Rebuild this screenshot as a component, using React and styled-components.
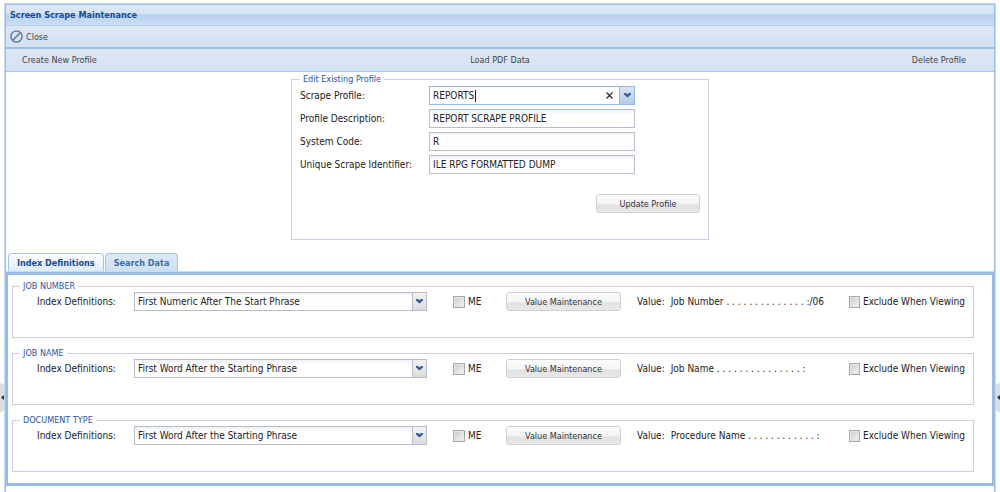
import React from "react";
import styled, { createGlobalStyle } from "styled-components";

const GlobalStyle = createGlobalStyle`
  *, *::before, *::after { box-sizing: border-box; }
  body {
    margin: 0;
    background: #fff;
    color: #222;
    font: 10px/12px "DejaVu Sans Condensed", Tahoma, sans-serif;
    overflow-x: hidden;
  }
  button, input, select { font: inherit; color: inherit; }
`;

const Page = styled.div`
  position: relative;
  display: flex;
  min-height: 100vh;
  padding: 3px 4px 0;
`;

const Window = styled.main`
  display: flex;
  flex: 1;
  min-width: 0;
  border: 1px solid #c5dbf7;
  border-bottom: 0;
`;

const Frame = styled.div`
  flex: 1;
  min-width: 0;
  border: 1px solid #99bbe8;
  border-bottom: 0;
`;

const TitleBar = styled.header`
  height: 21px;
  padding: 0 4px;
  border-bottom: 1px solid #b5cdee;
  background: linear-gradient(#dde9f7 0, #d3e2f5 9px, #b9d0ef 10px, #cbdff4 100%);
`;

const Title = styled.h1`
  margin: 0;
  font-size: 9px;
  line-height: 21px;
  color: #15499a;
`;

const Toolbar = styled.div`
  display: flex;
  height: 23px;
  padding: 0 4px;
  border-bottom: 2px solid #99bbe8;
  background: linear-gradient(#dfe8f4, #d3e1f1);
`;

const PlainButton = styled.button`
  display: flex;
  align-items: center;
  gap: 3px;
  border: 0;
  padding: 0;
  background: none;
  color: #444;
  font-size: 9px;
`;

const MenuBar = styled.nav`
  display: grid;
  grid-template-columns: 1fr auto 1fr;
  height: 23px;
  padding: 0 16px;
  border-bottom: 1px solid #a9c6e8;
  background: linear-gradient(#dfe8f4, #d3e1f1);

  & > :last-child { justify-self: end; padding-right: 12px; }
`;

const Group = styled.fieldset`
  min-width: 0;
  margin: 0;
  padding: 0;
  border: 1px solid #ccd0de;
`;

const Legend = styled.legend`
  padding: 0 3px;
  font-size: 9px;
  line-height: 12px;
  color: #2a55a0;
`;

const ProfileGroup = styled(Group)`
  width: 418px;
  max-width: 100%;
  height: 167px;
  margin: 1px auto 13px;
  padding: 1px 8px 0;
`;

const FieldRow = styled.div`
  display: flex;
  align-items: center;
  margin-bottom: 4px;
`;

const FieldLabel = styled.label`
  width: ${(p) => p.$width}px;
  flex: none;
`;

const TextInput = styled.input`
  width: 206px;
  height: 19px;
  padding: 0 3px;
  border: 1px solid #b9bdcb;
  border-radius: 0;
  outline: 0;
  background: linear-gradient(#f0f2f3, #fff 5px);
`;

const Combo = styled.div`
  position: relative;
  display: flex;
  width: 206px;
  height: 19px;
  border: 1px solid #8fb9e8;
  background: #fff;
`;

const ComboInput = styled.input`
  flex: 1;
  min-width: 0;
  padding: 0 3px;
  border: 0;
  outline: 0;
  background: none;
`;

const Caret = styled.span`
  position: absolute;
  top: 3px;
  left: 45px;
  width: 1px;
  height: 12px;
  background: #222;
`;

const ClearButton = styled.button`
  display: grid;
  place-items: center;
  width: 19px;
  padding: 0;
  border: 0;
  background: none;
`;

const DropButton = styled.button`
  display: grid;
  place-items: center;
  width: 15px;
  padding: 0;
  border: 0;
  border-left: 1px solid #8fb9e8;
  background: linear-gradient(#d6e4f6, #b4cdeb);
`;

const PushButton = styled.button`
  width: ${(p) => p.$width}px;
  height: 19px;
  padding: 0;
  border: 1px solid #cfcfcf;
  border-radius: 3px;
  background: linear-gradient(#fdfdfd 0, #f4f4f4 9px, #e2e2e2 10px, #e8e8e8 100%);
  color: #333;
  font-size: 9px;
`;

const Actions = styled.div`
  display: flex;
  justify-content: flex-end;
  padding-top: 16px;
`;

const TabStrip = styled.div`
  display: flex;
  align-items: flex-end;
  gap: 1px;
  height: 19px;
  padding: 0 2px;
  border-bottom: 1px solid #c5dbf7;
`;

const Tab = styled.button`
  height: 18px;
  padding: 0 8px;
  border: 1px solid #a3c3ea;
  border-bottom: 0;
  border-radius: 4px 4px 0 0;
  background: ${(p) => (p.$active ? "linear-gradient(#fff, #deecfd)" : "linear-gradient(#dbe8f8, #cfdff3)")};
  color: ${(p) => (p.$active ? "#15499a" : "#416da3")};
  font-size: 9px;
  font-weight: bold;
`;

const TabPanel = styled.section`
  display: flex;
  flex-direction: column;
  gap: 9px;
  padding: 5px 18px 11px 4px;
  border: solid #99bbe8;
  border-width: 3px 2px;
`;

const IndexGroup = styled(Group)`
  height: 58px;

  & > legend { margin-left: 7px; }
`;

const IndexRow = styled.div`
  display: flex;
  align-items: center;
  padding: 0 8px 0 24px;
  white-space: nowrap;
`;

const SelectWrap = styled.div`
  position: relative;
  flex: 1;
  min-width: 120px;
  height: 19px;

  & > span {
    position: absolute;
    inset: 1px 1px 1px auto;
    display: grid;
    place-items: center;
    width: 14px;
    border-left: 1px solid #b9bdcb;
    background: linear-gradient(#f3f3f3, #dcdcdc);
    pointer-events: none;
  }
`;

const Select = styled.select`
  appearance: none;
  display: block;
  width: 100%;
  height: 19px;
  padding: 0 18px 0 3px;
  border: 1px solid #b9bdcb;
  border-radius: 0;
  background: linear-gradient(#f0f2f3, #fff 5px);
`;

const Check = styled.label`
  display: flex;
  align-items: center;
  gap: 3px;
  width: ${(p) => p.$width}px;
  margin-left: ${(p) => p.$before || 0}px;
  flex: none;
`;

const Box = styled.input`
  appearance: none;
  width: 12px;
  height: 12px;
  margin: 0;
  border: 1px solid #a3abb0;
  background: linear-gradient(135deg, #c4c8cd, #f7f7f7);
  box-shadow: inset 0 0 0 1px #e6e6e6;
`;

const ValueText = styled.div`
  display: flex;
  gap: 6px;
  flex: none;
  width: 212px;
  margin-left: 16px;
`;

const Grip = styled.button`
  position: absolute;
  top: 383px;
  ${(p) => p.$side}: 0;
  display: grid;
  place-items: center;
  width: 4px;
  height: 29px;
  padding: 0;
  border: 0;
  border-radius: ${(p) => (p.$side === "left" ? "0 4px 4px 0" : "4px 0 0 4px")};
  background: #dcdcdc;
`;

const Chevron = () => (
  <svg width="7" height="5" viewBox="0 0 7 5" aria-hidden="true">
    <path d="M0 0h2l1.5 1.300L5 0h2v1.500L3.500 4.500 0 1.500z" fill="#3c5c9c" />
  </svg>
);

const Arrow = () => (
  <svg width="3" height="5" viewBox="0 0 3 5" aria-hidden="true">
    <path d="M3 0v5L0 2.500z" fill="#333" />
  </svg>
);

const CloseIcon = () => (
  <svg width="13" height="13" viewBox="0 0 13 13" fill="none" stroke="#5d81a5" strokeWidth="1.500" aria-hidden="true">
    <circle cx="6.500" cy="6.500" r="5.600" />
    <path d="M10.400 2.600l-7.800 7.800" />
  </svg>
);

const fields = [
  { id: "description", label: "Profile Description:", value: "REPORT SCRAPE PROFILE" },
  { id: "system", label: "System Code:", value: "R" },
  { id: "identifier", label: "Unique Scrape Identifier:", value: "ILE RPG FORMATTED DUMP" },
];

const indexes = [
  { id: "number", title: "JOB NUMBER", rule: "First Numeric After The Start Phrase", value: "Job Number . . . . . . . . . . . . . . :/06" },
  { id: "name", title: "JOB NAME", rule: "First Word After the Starting Phrase", value: "Job Name . . . . . . . . . . . . . . . :" },
  { id: "type", title: "DOCUMENT TYPE", rule: "First Word After the Starting Phrase", value: "Procedure Name . . . . . . . . . . . . :" },
];

export default function App() {
  return (
    <>
      <GlobalStyle />
      <Page>
        <Window>
          <Frame>
            <TitleBar>
              <Title>Screen Scrape Maintenance</Title>
            </TitleBar>
            <Toolbar>
              <PlainButton><CloseIcon />Close</PlainButton>
            </Toolbar>
            <MenuBar>
              <PlainButton>Create New Profile</PlainButton>
              <PlainButton>Load PDF Data</PlainButton>
              <PlainButton>Delete Profile</PlainButton>
            </MenuBar>

            <ProfileGroup>
              <Legend>Edit Existing Profile</Legend>
              <FieldRow>
                <FieldLabel $width={129} htmlFor="profile">Scrape Profile:</FieldLabel>
                <Combo>
                  <ComboInput id="profile" defaultValue="REPORTS" />
                  <Caret />
                  <ClearButton aria-label="Clear">
                    <svg width="7" height="7" viewBox="0 0 7 7" stroke="#222" strokeWidth="1.100" aria-hidden="true">
                      <path d="M.5.5l6 6M6.500.5l-6 6" />
                    </svg>
                  </ClearButton>
                  <DropButton aria-label="Show profiles"><Chevron /></DropButton>
                </Combo>
              </FieldRow>
              {fields.map((f) => (
                <FieldRow key={f.id}>
                  <FieldLabel $width={129} htmlFor={f.id}>{f.label}</FieldLabel>
                  <TextInput id={f.id} defaultValue={f.value} />
                </FieldRow>
              ))}
              <Actions>
                <PushButton $width={104}>Update Profile</PushButton>
              </Actions>
            </ProfileGroup>

            <TabStrip role="tablist">
              <Tab role="tab" aria-selected="true" $active>Index Definitions</Tab>
              <Tab role="tab" aria-selected="false">Search Data</Tab>
            </TabStrip>
            <TabPanel role="tabpanel">
              {indexes.map((x) => (
                <IndexGroup key={x.id}>
                  <Legend>{x.title}</Legend>
                  <IndexRow>
                    <FieldLabel $width={97} htmlFor={x.id}>Index Definitions:</FieldLabel>
                    <SelectWrap>
                      <Select id={x.id}><option>{x.rule}</option></Select>
                      <span><Chevron /></span>
                    </SelectWrap>
                    <Check $width={53} $before={26}><Box type="checkbox" />ME</Check>
                    <PushButton $width={115}>Value Maintenance</PushButton>
                    <ValueText><span>Value:</span><span>{x.value}</span></ValueText>
                    <Check $width={116}><Box type="checkbox" />Exclude When Viewing</Check>
                  </IndexRow>
                </IndexGroup>
              ))}
            </TabPanel>
          </Frame>
        </Window>
        <Grip $side="left" aria-label="Collapse left panel"><Arrow /></Grip>
        <Grip $side="right" aria-label="Expand right panel"><Arrow /></Grip>
      </Page>
    </>
  );
}
